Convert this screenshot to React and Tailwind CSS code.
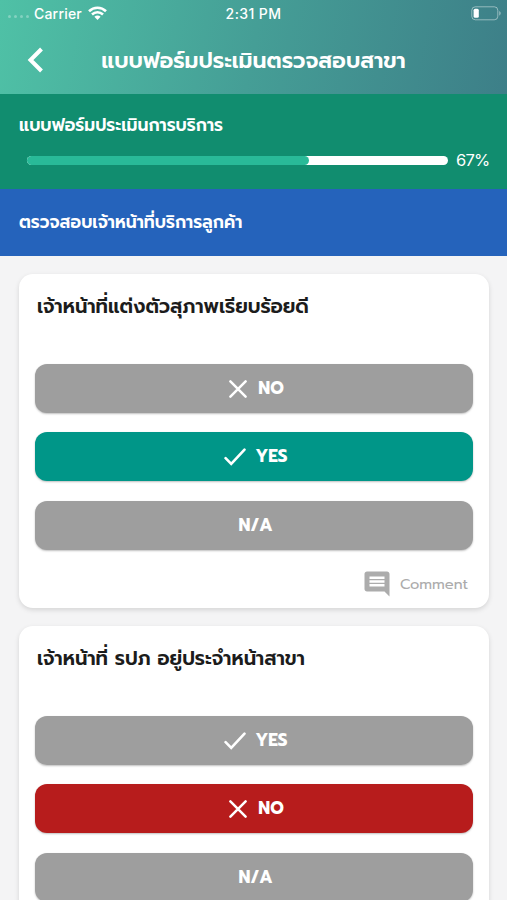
import React from 'react';
import { MdInsertComment } from 'react-icons/md';

const QUESTIONS = [
    {
        id: 1,
        title: 'เจ้าหน้าที่แต่งตัวสุภาพเรียบร้อยดี',
        options: ['NO', 'YES', 'N/A'],
        answer: 'YES',
        canComment: true,
    },
    {
        id: 2,
        title: 'เจ้าหน้าที่ รปภ อยู่ประจำหน้าสาขา',
        options: ['YES', 'NO', 'N/A'],
        answer: 'NO',
        canComment: false,
    },
];

const ANSWER_COLORS = {
    YES: 'bg-[#009688]',
    NO: 'bg-[#b71c1c]',
    'N/A': 'bg-[#607d8b]',
};

const CloseIcon = () => (
    <svg className="w-[18px] h-[18px] ml-[2px] mr-[11px]" viewBox="0 0 18 18" fill="none" stroke="currentColor" strokeWidth="2.5" strokeLinecap="round">
        <path d="M1.4 1.4L16.6 16.6M16.6 1.4L1.4 16.6" />
    </svg>
);

const CheckIcon = () => (
    <svg className="w-[22px] h-[18px] ml-px mr-[9px] mt-px" viewBox="0 0 22 18" fill="none" stroke="currentColor" strokeWidth="2.6" strokeLinecap="round">
        <path d="M1.6 10.2L7.2 15.8L20.5 1.6" />
    </svg>
);

const OptionButton = ({ label, selected }) => (
    <button
        className={`flex h-[49px] w-full shrink-0 items-center justify-center rounded-[12px] pl-[3px] text-[17px] font-bold text-white shadow-[0_1px_2px_rgba(0,0,0,0.25)] ${selected ? ANSWER_COLORS[label] : 'bg-[#9e9e9e]'}`}
    >
        {label === 'NO' && <CloseIcon />}
        {label === 'YES' && <CheckIcon />}
        <span>{label}</span>
    </button>
);

const QuestionCard = ({ question }) => (
    <div className="flex h-[334px] shrink-0 flex-col rounded-[14px] bg-white px-4 shadow-[0_2px_5px_rgba(0,0,0,0.13)]">
        <h2 className="ml-[2px] mt-[18px] h-[30px] whitespace-nowrap text-[19.5px] font-semibold leading-[30px] text-[#1c1c1c]">{question.title}</h2>
        <div className="mt-[42px] flex flex-col gap-[19.4px]">
            {question.options.map((option) => (
                <OptionButton key={option} label={option} selected={option === question.answer} />
            ))}
        </div>
        {question.canComment && (
            <div className="mt-[19px] flex h-[30px] items-center justify-end pr-[5px] text-[#acacac]">
                <MdInsertComment className="mr-2 h-[30px] w-[30px]" />
                <span className="text-[14.7px]">Comment</span>
            </div>
        )}
    </div>
);

const StatusBar = () => (
    <div className="grid h-[26px] grid-cols-3 items-center pl-[8px] pr-[6px] font-[Inter] text-[14px] font-medium">
        <div className="flex items-center">
            <div className="mr-[5px] mt-[7px] flex gap-[3px]">
                {[1, 2, 3, 4].map((dot) => (
                    <span key={dot} className="h-[3px] w-[3px] rounded-full bg-white/30" />
                ))}
            </div>
            <span className="tracking-[0.2px]">Carrier</span>
            <svg className="ml-[6px] h-[14px] w-[19px]" viewBox="0 0 19 14" fill="none" stroke="currentColor" strokeWidth="2.6">
                <path d="M1 5.2C5.8.6 13.2.6 18 5.2M4 8.5c3.2-3 7.8-3 11 0" />
                <path d="M9.5 14L6.4 10.8c1.8-1.6 4.4-1.6 6.2 0z" fill="currentColor" stroke="none" />
            </svg>
        </div>
        <span className="-ml-[2px] whitespace-nowrap text-center tracking-[0.4px]">2:31 PM</span>
        <svg className="h-[15px] w-[30px] justify-self-end" viewBox="0 0 30 15">
            <rect x="0.8" y="0.8" width="26" height="13" rx="3.5" fill="none" stroke="white" strokeOpacity="0.45" />
            <rect x="2.6" y="2.8" width="5.2" height="9" rx="1.5" fill="white" />
            <path d="M28.2 5v4.6c2-.8 2-3.8 0-4.6z" fill="white" fillOpacity="0.45" />
        </svg>
    </div>
);

const App = () => {
    const progress = 67;

    return (
        <div className="flex h-[900px] w-[507px] flex-col overflow-hidden bg-[#f4f4f5] font-['Prompt','Noto_Sans_Thai','Open_Sans',sans-serif]">
            <header className="h-[94px] shrink-0 bg-[linear-gradient(100deg,#4fc1a6_0%,#459e96_50%,#3d7f88_100%)] text-white">
                <StatusBar />
                <div className="flex h-[68px] items-center">
                    <svg className="ml-[27px] h-[26px] w-[18px]" viewBox="0 0 18 26" fill="none" stroke="currentColor" strokeWidth="4">
                        <path d="M14.5 2L3.5 13L14.5 24" />
                    </svg>
                    <h1 className="mt-[2px] flex-1 whitespace-nowrap pr-[45px] text-center text-[21.9px] font-semibold">แบบฟอร์มประเมินตรวจสอบสาขา</h1>
                </div>
            </header>

            <section className="h-[95px] shrink-0 bg-[#118d6f] pl-[19px] pr-[17px] pt-[17px] text-white">
                <h2 className="h-7 whitespace-nowrap text-[17.15px] font-semibold leading-7">แบบฟอร์มประเมินการบริการ</h2>
                <div className="ml-2 mt-[9px] flex h-6 items-center">
                    <div className="h-[9px] w-[421px] shrink-0 rounded-full bg-white">
                        <div className="h-full rounded-full bg-[#29ba98]" style={{ width: `${progress}%` }} />
                    </div>
                    <span className="ml-2 mt-px font-[Inter] text-[16.5px] tracking-[-0.8px]">{progress}%</span>
                </div>
            </section>

            <section className="flex h-[67px] shrink-0 items-center bg-[#2563bb] pl-[19px] text-white">
                <h2 className="whitespace-nowrap text-[17.15px] font-semibold">ตรวจสอบเจ้าหน้าที่บริการลูกค้า</h2>
            </section>

            <main className="flex flex-col gap-[18px] pl-[19px] pr-[18px] pt-[18px]">
                {QUESTIONS.map((question) => (
                    <QuestionCard key={question.id} question={question} />
                ))}
            </main>
        </div>
    );
};

export default App;
